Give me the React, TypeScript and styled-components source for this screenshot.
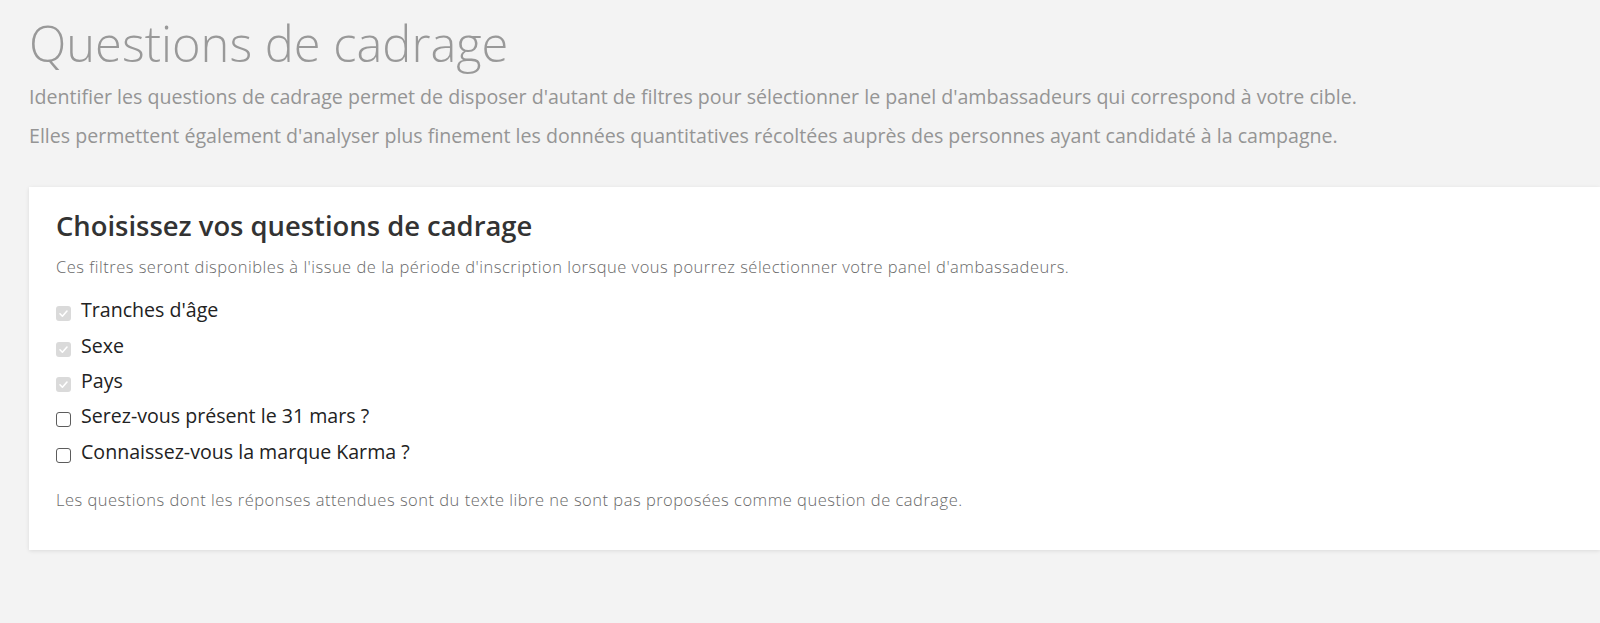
import React from "react";
import styled, { createGlobalStyle } from "styled-components";

const GlobalStyle = createGlobalStyle`
    html, body {
        margin: 0;
        padding: 0;
        background: #f3f3f3;
        overflow: hidden;
    }
    body {
        font-family: "Open Sans", "Noto Sans", Arial, sans-serif;
    }
`;

const Page = styled.div`
    min-height: 100vh;
    padding: 14px 0 0 29px;
    box-sizing: border-box;
`;

const Title = styled.h1`
    margin: 0 0 10px;
    font-size: 48.8px;
    line-height: 1.2;
    font-weight: 300;
    color: #999999;
`;

const Lead = styled.p`
    margin: 0 0 12px;
    font-size: 19.6px;
    line-height: 27px;
    font-weight: 400;
    color: #959595;
`;

const Card = styled.section`
    margin-top: 38px;
    background: #ffffff;
    box-shadow: 0 1px 4px rgba(0, 0, 0, 0.1);
    padding: 23px 27px 38.5px;
`;

const CardTitle = styled.h2`
    margin: 0 0 13px;
    font-size: 27.4px;
    line-height: 1.2;
    font-weight: 600;
    color: #333333;
`;

const Hint = styled.p<{ $space?: number }>`
    margin: 0;
    margin-top: ${({ $space }) => $space ?? 0}px;
    font-size: 16.5px;
    letter-spacing: 0.5px;
    line-height: 24px;
    font-weight: 300;
    color: #696969;
`;

const List = styled.div`
    display: flex;
    flex-direction: column;
    gap: 8.3px;
    margin-top: 17px;
`;

const Row = styled.label`
    display: flex;
    align-items: flex-start;
    gap: 10px;
    font-size: 19.6px;
    line-height: 27px;
    color: #222222;
`;

const Box = styled.span<{ $checked: boolean }>`
    flex: none;
    width: 15px;
    height: 15px;
    margin-top: 10px;
    box-sizing: border-box;
    border-radius: 3px;
    display: flex;
    align-items: center;
    justify-content: center;
    background: ${({ $checked }) => ($checked ? "#dadada" : "#ffffff")};
    border: ${({ $checked }) => ($checked ? "none" : "1px solid #5c5c5c")};
`;

const items = [
    { label: "Tranches d'âge", checked: true },
    { label: "Sexe", checked: true },
    { label: "Pays", checked: true },
    { label: "Serez-vous présent le 31 mars ?", checked: false },
    { label: "Connaissez-vous la marque Karma ?", checked: false },
];

const Check = () => (
    <svg width="11" height="11" viewBox="0 0 11 11">
        <path d="M2 5.8 L4.4 8.2 L9 3" fill="none" stroke="#ffffff" strokeWidth="1.6" strokeLinecap="round" strokeLinejoin="round" />
    </svg>
);

const App: React.FC = () => {
    return (
        <Page>
            <GlobalStyle />
            <Title>Questions de cadrage</Title>
            <Lead>
                Identifier les questions de cadrage permet de disposer d'autant de filtres pour sélectionner le panel
                d'ambassadeurs qui correspond à votre cible.
            </Lead>
            <Lead>
                Elles permettent également d'analyser plus finement les données quantitatives récoltées auprès des
                personnes ayant candidaté à la campagne.
            </Lead>
            <Card>
                <CardTitle>Choisissez vos questions de cadrage</CardTitle>
                <Hint>
                    Ces filtres seront disponibles à l'issue de la période d'inscription lorsque vous pourrez sélectionner
                    votre panel d'ambassadeurs.
                </Hint>
                <List>
                    {items.map((item) => (
                        <Row key={item.label}>
                            <Box $checked={item.checked}>{item.checked && <Check />}</Box>
                            {item.label}
                        </Row>
                    ))}
                </List>
                <Hint $space={23}>
                    Les questions dont les réponses attendues sont du texte libre ne sont pas proposées comme question de
                    cadrage.
                </Hint>
            </Card>
        </Page>
    );
};

export default App;
